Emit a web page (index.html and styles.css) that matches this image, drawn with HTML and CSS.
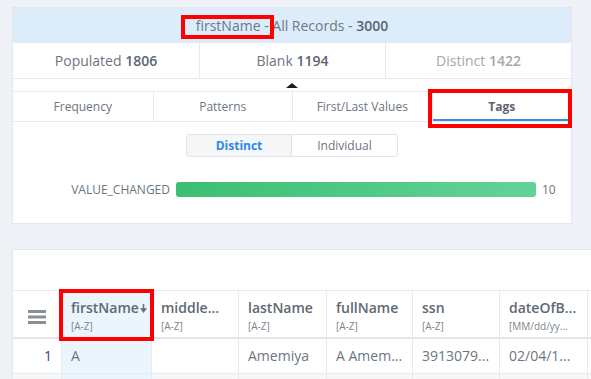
FILE: index.html
```html
<!DOCTYPE html>
<html>
<head>
    <title>Profile - firstName</title>
    <link rel="stylesheet" href="styles.css">
</head>
<body>
    <div class="profile">
        <div class="profile-head">
            <span class="marked marked-title">firstName -</span> All Records - <b>3000</b>
        </div>
        <div class="stats">
            <div class="stat">Populated <b>1806</b></div>
            <div class="stat">Blank <b>1194</b></div>
            <div class="stat muted">Distinct <b>1422</b></div>
        </div>
        <div class="pointer-row">
            <span></span>
            <span class="pointer-cell"><span class="pointer"></span></span>
            <span></span>
        </div>
        <div class="tabs">
            <div class="tab">Frequency</div>
            <div class="tab">Patterns</div>
            <div class="tab">First/Last Values</div>
            <div class="tab selected marked marked-tab">Tags</div>
        </div>
        <div class="toggle">
            <div class="toggle-btn on">Distinct</div>
            <div class="toggle-btn">Individual</div>
        </div>
        <div class="bars">
            <div class="bar-label">VALUE_CHANGED</div>
            <div class="bar-track"><div class="bar-fill" style="width: 100%"></div></div>
            <div class="bar-count">10</div>
        </div>
    </div>

    <div class="grid-panel">
        <div class="grid-toolbar"></div>
        <div class="grid-row grid-head">
            <div class="cell menu-cell">
                <svg width="18" height="14" viewBox="0 0 18 14">
                    <rect x="0" y="0" width="18" height="3" fill="#8a8f95"/>
                    <rect x="0" y="5.5" width="18" height="3" fill="#8a8f95"/>
                    <rect x="0" y="11" width="18" height="3" fill="#8a8f95"/>
                </svg>
            </div>
            <div class="cell col-sel marked marked-col">
                <div class="col-name">firstName<svg class="sort" width="7" height="9" viewBox="0 0 7 9"><path d="M2.7 0h1.6v5H2.7z M0 4.3h7L3.5 9z" fill="#66707a"/></svg></div>
                <div class="col-type">[A-Z]</div>
            </div>
            <div class="cell">
                <div class="col-name">middle...</div>
                <div class="col-type">[A-Z]</div>
            </div>
            <div class="cell">
                <div class="col-name">lastName</div>
                <div class="col-type">[A-Z]</div>
            </div>
            <div class="cell">
                <div class="col-name">fullName</div>
                <div class="col-type">[A-Z]</div>
            </div>
            <div class="cell">
                <div class="col-name">ssn</div>
                <div class="col-type">[A-Z]</div>
            </div>
            <div class="cell">
                <div class="col-name">dateOfB...</div>
                <div class="col-type">[MM/dd/yy...</div>
            </div>
            <div class="cell"></div>
        </div>
        <div class="grid-row grid-body">
            <div class="cell row-num">1</div>
            <div class="cell col-sel">A</div>
            <div class="cell"></div>
            <div class="cell">Amemiya</div>
            <div class="cell">A Amem...</div>
            <div class="cell">3913079...</div>
            <div class="cell">02/04/1...</div>
            <div class="cell"></div>
        </div>
        <div class="grid-row grid-body alt">
            <div class="cell"></div>
            <div class="cell col-sel"></div>
            <div class="cell"></div>
            <div class="cell"></div>
            <div class="cell"></div>
            <div class="cell"></div>
            <div class="cell"></div>
            <div class="cell"></div>
        </div>
    </div>
</body>
</html>
```

FILE: styles.css
```css
html, body {
    height: 100%;
    overflow: hidden;
}

body {
    margin: 0;
    padding: 7px 0 0 12px;
    box-sizing: border-box;
    background-color: #eef2f6;
    color: #6b7582;
    font-family: "Open Sans", Arial, sans-serif;
}

/* annotation boxes */
.marked {
    position: relative;
}

.marked::after {
    content: "";
    position: absolute;
    border: 4px solid #f00;
}

.marked-title::after {
    top: -1px;
    left: -15px;
    right: -5px;
    bottom: -4px;
}

.marked-tab::after {
    top: -3px;
    left: -5px;
    right: -1px;
    bottom: -7px;
}

.marked-col::after {
    top: -2px;
    left: -3px;
    right: -3px;
    bottom: -4px;
}

/* profile card */
.profile {
    width: 560px;
    box-sizing: border-box;
    background-color: #fff;
    border: 1px solid #e3e7eb;
    padding-bottom: 25px;
}

.profile-head {
    height: 35px;
    line-height: 35px;
    background-color: #dcecfb;
    text-align: center;
    font-size: 14px;
    color: #6e7884;
}

.profile-head b {
    font-weight: 600;
    color: #5b6571;
}

.stats {
    display: grid;
    grid-template-columns: 1fr 1fr 1fr;
    border-bottom: 1px solid #e6e9ed;
}

.stat {
    height: 35px;
    line-height: 35px;
    text-align: center;
    font-size: 14px;
}

.stat + .stat {
    border-left: 1px solid #e6e9ed;
}

.stat b {
    font-weight: 600;
    color: #5b6571;
}

.stat.muted,
.stat.muted b {
    color: #a2a8ae;
}

.pointer-row {
    display: grid;
    grid-template-columns: 1fr 1fr 1fr;
    height: 12px;
}

.pointer-cell {
    display: flex;
    justify-content: center;
    padding-top: 4px;
}

.pointer {
    width: 0;
    height: 0;
    border-left: 6px solid transparent;
    border-right: 6px solid transparent;
    border-bottom: 5px solid #1c1c1c;
}

.tabs {
    display: grid;
    grid-template-columns: 1fr 1fr 1fr 1fr;
    border-top: 1px solid #e6e9ed;
    border-bottom: 1px solid #e6e9ed;
}

.tab {
    height: 29px;
    line-height: 29px;
    text-align: center;
    font-size: 12px;
}

.tab + .tab {
    border-left: 1px solid #e6e9ed;
}

.tab.selected {
    font-weight: 700;
    color: #5d6670;
    box-shadow: inset 0 -2px 0 #3d8fd9;
}

.toggle {
    display: grid;
    grid-template-columns: 1fr 1fr;
    width: 210px;
    margin: 12px auto 0;
    border: 1px solid #e1e5ea;
    border-radius: 3px;
    overflow: hidden;
}

.toggle-btn {
    height: 21px;
    line-height: 21px;
    text-align: center;
    font-size: 12px;
}

.toggle-btn.on {
    background-color: #f4f6f8;
    color: #2d8ae6;
    font-weight: 700;
    border-right: 1px solid #e1e5ea;
}

.bars {
    display: grid;
    grid-template-columns: 157px 360px auto;
    column-gap: 6px;
    align-items: center;
    margin-top: 24px;
    font-size: 12px;
}

.bar-label {
    text-align: right;
}

.bar-track {
    height: 15px;
}

.bar-fill {
    height: 100%;
    border-radius: 3px;
    background: linear-gradient(to right, #3bbf72, #64d298);
}

/* data grid */
.grid-panel {
    width: 579px;
    margin-top: 25px;
    background-color: #fff;
    border: 1px solid #e3e7eb;
    border-right: none;
    box-sizing: border-box;
    overflow: hidden;
}

.grid-toolbar {
    height: 40px;
}

.grid-row {
    display: grid;
    grid-template-columns: 49px 90px 87px 88px 86px 87px 88px 100px;
}

.cell {
    box-sizing: border-box;
    border-right: 1px solid #e8ebee;
    min-width: 0;
}

.grid-head {
    border-top: 1px solid #e8ebee;
    border-bottom: 2px solid #e3e6ea;
}

.grid-head .cell {
    height: 46px;
    padding: 8px 4px 0 9px;
}

.col-name {
    font-size: 14px;
    line-height: 18px;
    font-weight: 600;
    color: #5f6873;
    white-space: nowrap;
}

.sort {
    margin-left: 1px;
    vertical-align: 0;
}

.col-type {
    margin-top: 2px;
    font-size: 10px;
    line-height: 14px;
    color: #7d8590;
    white-space: nowrap;
}

.grid-head .menu-cell {
    display: flex;
    justify-content: center;
    padding: 19px 0 0 0;
}

.col-sel {
    background-color: #eaf5fd;
}

.grid-body {
    border-bottom: 1px solid #e8ebee;
}

.grid-body .cell {
    height: 34px;
    line-height: 34px;
    padding: 0 4px 0 9px;
    font-size: 14px;
    white-space: nowrap;
}

.grid-body .row-num {
    text-align: right;
    padding-right: 9px;
    color: #4a3590;
}

.grid-body.alt {
    background-color: #f6f7f9;
}

.grid-body.alt .col-sel {
    background-color: #eaf5fd;
}
```
